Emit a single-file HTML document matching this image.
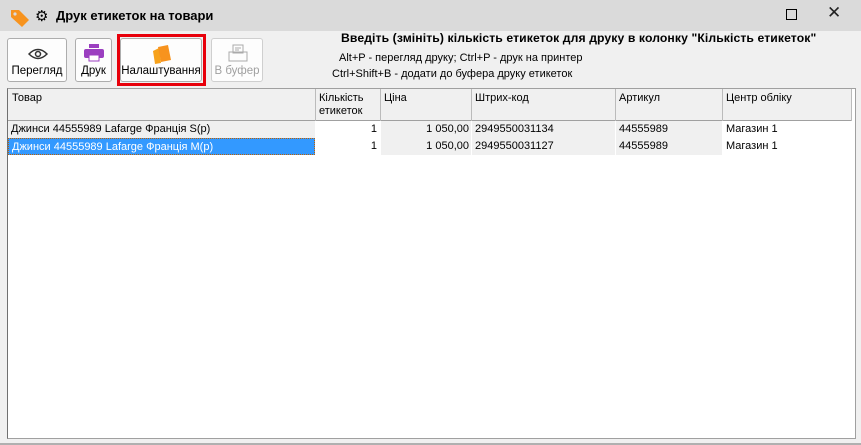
<!DOCTYPE html><html><head><meta charset="utf-8"><style>
*{margin:0;padding:0;box-sizing:border-box}
body{width:861px;height:445px;background:#f0f0f0;font-family:"Liberation Sans",sans-serif;font-size:11px;color:#000;position:relative;overflow:hidden}
.a{position:absolute;white-space:nowrap}
.btn{position:absolute;top:38px;height:44px;border:1px solid #adadad;border-radius:3px;background:#fdfdfd;font-size:11.5px;text-align:center}
.btn span{position:absolute;left:0;right:0;bottom:4px}
.c{position:absolute;height:17px;line-height:16px;padding:0 3px;font-size:11px}
</style></head><body>
<div class="a" style="left:0;top:0;width:861px;height:31px;background:#dadada"></div>
<svg class="a" style="left:9px;top:8px" width="22" height="20" viewBox="0 0 22 20"><path d="M2 2h8l10 10-7 7L2 9z" fill="#f7931e"/><circle cx="6" cy="6" r="1.6" fill="#dadada"/></svg>
<div class="a" style="left:35px;top:7px;font-size:15px">⚙</div>
<div class="a" style="left:56px;top:8px;font-size:13px;font-weight:bold">Друк етикеток на товари</div>
<div class="a" style="left:786px;top:9px;width:11px;height:11px;border:1px solid #000"></div>
<div class="a" style="left:827px;top:3px;font-size:17px;color:#222">✕</div>

<div class="btn" style="left:7px;width:60px"><svg style="position:absolute;left:20px;top:9px" width="20" height="12"><path d="M1 6Q10-3 19 6Q10 15 1 6z" fill="none" stroke="#333" stroke-width="1.5"/><circle cx="10" cy="6" r="2.5" fill="none" stroke="#333" stroke-width="1.5"/></svg><span>Перегляд</span></div>
<div class="btn" style="left:75px;width:37px"><svg style="position:absolute;left:8px;top:5px" width="20" height="18"><rect x="5" y="0" width="10" height="4" fill="#9b3fc0"/><rect x="0" y="5" width="20" height="9" rx="2" fill="#9b3fc0"/><rect x="5" y="11" width="10" height="6" fill="#fff" stroke="#9b3fc0"/></svg><span>Друк</span></div>
<div class="btn" style="left:120px;width:82px"><svg style="position:absolute;left:29px;top:4px" width="22" height="22"><path d="M3 8l6-3 2 15-6 1z" fill="#f7a21b"/><path d="M8 4l10-2 3 15-10 2z" fill="#f7931e"/></svg><span>Налаштування</span></div>
<div class="a" style="left:117px;top:34px;width:89px;height:52px;border:3px solid #e8000b"></div>
<div class="btn" style="left:211px;width:52px;color:#a0a0a0;border-color:#cfcfcf"><svg style="position:absolute;left:16px;top:5px" width="20" height="20"><rect x="5" y="1" width="10" height="8" fill="none" stroke="#aaa"/><rect x="1" y="8" width="18" height="9" fill="none" stroke="#aaa"/><path d="M7 4h6M7 6h4" stroke="#aaa"/></svg><span>В буфер</span></div>
<svg class="a" style="left:205px;top:84px" width="70" height="40"><path d="M62 35L12 8" stroke="#e8000b" stroke-width="3"/><path d="M4 4l16 0-8 12z" fill="#e8000b"/></svg>

<div class="a" style="left:341px;top:31px;font-size:12.2px;font-weight:bold;letter-spacing:0.1px">Введіть (змініть) кількість етикеток для друку в колонку "Кількість етикеток"</div>
<div class="a" style="left:339px;top:52px;font-size:11px">Alt+P - перегляд друку; Ctrl+P - друк на принтер</div>
<div class="a" style="left:332px;top:68px;font-size:11px">Ctrl+Shift+B - додати до буфера друку етикеток</div>

<div class="a" style="left:7px;top:88px;width:849px;height:351px;background:#fff;border:1px solid #a0a0a0;border-left:1px solid #707070"></div>
<div class="a" style="left:8px;top:89px;width:843px;height:32px;background:#f0f0f0;border-bottom:1px solid #a0a0a0"></div>
<div class="a" style="left:12px;top:92px">Товар</div>
<div class="a" style="left:319px;top:92px;line-height:13px">Кількість<br>етикеток</div>
<div class="a" style="left:384px;top:92px">Ціна</div>
<div class="a" style="left:475px;top:92px">Штрих-код</div>
<div class="a" style="left:619px;top:92px">Артикул</div>
<div class="a" style="left:726px;top:92px">Центр обліку</div>
<div class="a" style="left:315px;top:89px;width:1px;height:32px;background:#bbb"></div>
<div class="a" style="left:380px;top:89px;width:1px;height:32px;background:#bbb"></div>
<div class="a" style="left:471px;top:89px;width:1px;height:32px;background:#bbb"></div>
<div class="a" style="left:615px;top:89px;width:1px;height:32px;background:#bbb"></div>
<div class="a" style="left:722px;top:89px;width:1px;height:32px;background:#bbb"></div>
<div class="a" style="left:851px;top:89px;width:1px;height:32px;background:#bbb"></div>

<div class="c" style="left:8px;top:121px;width:307px;background:#f0f0f0">Джинси 44555989 Lafarge Франція S(p)</div>
<div class="c" style="left:316px;top:121px;width:64px;background:#fff;text-align:right">1</div>
<div class="c" style="left:381px;top:121px;width:90px;background:#f0f0f0;text-align:right;padding-right:2px">1 050,00</div>
<div class="c" style="left:472px;top:121px;width:143px;background:#f0f0f0">2949550031134</div>
<div class="c" style="left:616px;top:121px;width:106px;background:#f0f0f0">44555989</div>
<div class="c" style="left:723px;top:121px;width:128px;background:#fff">Магазин 1</div>

<div class="c" style="left:8px;top:138px;width:307px;background:#3399ff;color:#fff;border:1px dotted #c06000">Джинси 44555989 Lafarge Франція M(p)</div>
<div class="c" style="left:316px;top:138px;width:64px;background:#fff;text-align:right">1</div>
<div class="c" style="left:381px;top:138px;width:90px;background:#f0f0f0;text-align:right;padding-right:2px">1 050,00</div>
<div class="c" style="left:472px;top:138px;width:143px;background:#f0f0f0">2949550031127</div>
<div class="c" style="left:616px;top:138px;width:106px;background:#f0f0f0">44555989</div>
<div class="c" style="left:723px;top:138px;width:128px;background:#fff">Магазин 1</div>
<div class="a" style="left:0;top:443px;width:861px;height:2px;background:#b0b0b0"></div>
</body></html>
